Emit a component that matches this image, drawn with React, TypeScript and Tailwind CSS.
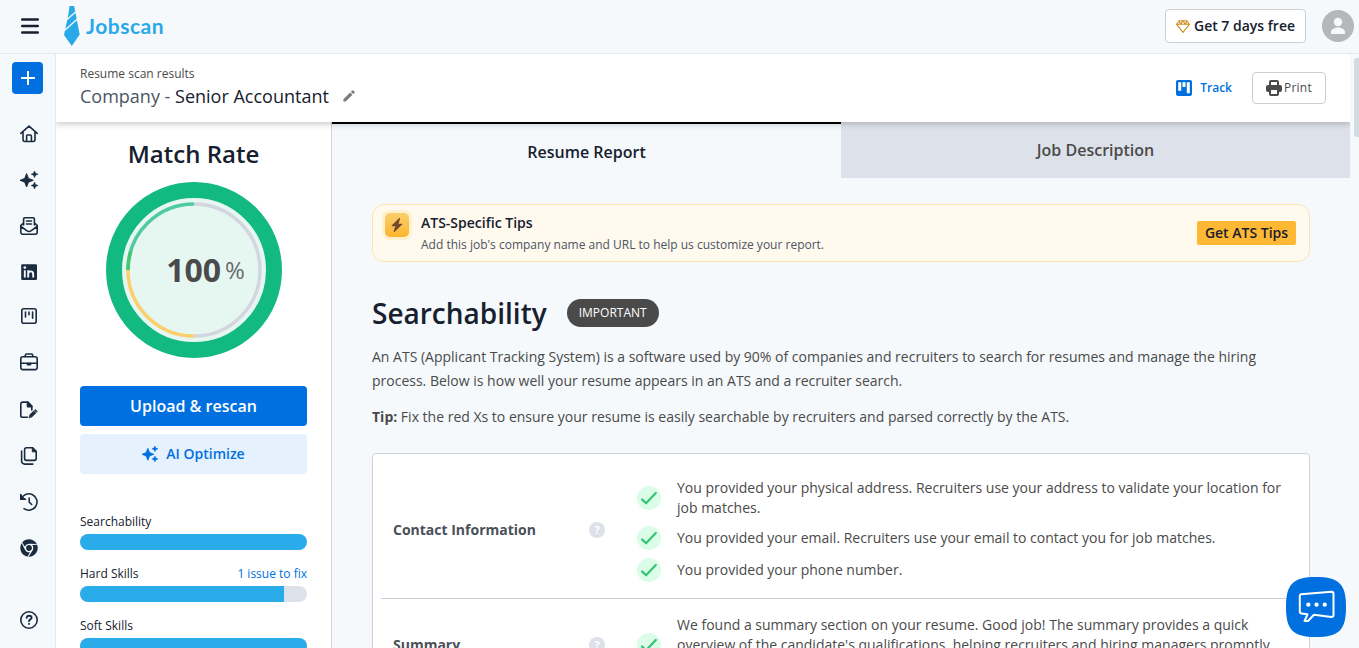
import React from "react";
import { FaChrome } from "react-icons/fa";

type IconProps = { className?: string };

function Sparkles({ className }: IconProps) {
  return (
    <svg viewBox="0 0 18 18" className={className} fill="currentColor">
      <path d="M6.6 2.6 8.5 7.4 13.3 9.3 8.5 11.200 6.600 16 4.700 11.200 0 9.300 4.700 7.400Z" stroke="currentColor" strokeWidth=".9" strokeLinejoin="round" />
      <path d="M14.500 0 15.500 2.300 18 3.200 15.500 4.200 14.500 6.500 13.500 4.200 11.200 3.200 13.500 2.300ZM14.500 11.200 15.500 13.600 18 14.500 15.500 15.500 14.500 18 13.500 15.500 11.200 14.500 13.500 13.600Z" stroke="currentColor" strokeWidth=".6" strokeLinejoin="round" />
    </svg>
  );
}

function Stroke({ children }: { children: React.ReactNode }) {
  return (
    <svg viewBox="0 0 18 18" className="h-[18px] w-[18px] overflow-visible" fill="none" stroke="currentColor" strokeWidth="1.6" strokeLinecap="round" strokeLinejoin="round">
      {children}
    </svg>
  );
}

const navIcons: { gap: string; icon: React.ReactNode }[] = [
  { gap: "mt-[31px]", icon: <Stroke><path d="M.8 8.400 9 1.200l8.200 7.200M3 6.800v7.700a2 2 0 0 0 2 2h8a2 2 0 0 0 2-2V6.800M6.600 16.300V11a1 1 0 0 1 1-1h2.800a1 1 0 0 1 1 1v5.300" /></Stroke> },
  { gap: "mt-7", icon: <Sparkles className="h-[18px] w-[18px]" /> },
  { gap: "mt-7", icon: <Stroke><path d="M3.600 8V2a1.200 1.200 0 0 1 1.200-1.200h8.400A1.200 1.200 0 0 1 14.400 2v6M6.500 4h5M6.500 7h5M3.500 6.200.800 8.300v7a1.900 1.900 0 0 0 1.900 1.900h12.600a1.900 1.900 0 0 0 1.900-1.900v-7l-2.700-2.100M1 9.500l5.700 4.200q2.300 1.500 4.600 0L17 9.500" /></Stroke> },
  { gap: "mt-7", icon: (
    <svg viewBox="0 0 18 18" className="h-[18px] w-[18px]">
      <rect x="1.200" y="1.200" width="15.800" height="15.800" rx="1.200" fill="currentColor" />
      <path d="M4.800 7.200v7.300M8.200 7.200v7.300M8.200 11c0-3.500 5-3.500 5 0v3.500" fill="none" stroke="#f5f9fc" strokeWidth="1.900" />
      <circle cx="4.800" cy="4.600" r="1.350" fill="#f5f9fc" />
    </svg>
  ) },
  { gap: "mt-[26px]", icon: <Stroke><rect x="1.800" y="1.800" width="14.400" height="14.400" rx="2" /><path d="M5.500 5v5M9 5v2.800M12.600 5v6.200" /></Stroke> },
  { gap: "mt-7", icon: <Stroke><rect x=".8" y="3.800" width="16.400" height="12.800" rx="2" /><path d="M5.300 3.500V2.300A1.300 1.300 0 0 1 6.600 1h4.800a1.300 1.300 0 0 1 1.300 1.300v1.200M1 10.200h16" /><path d="M7.500 10.500h3v1.200h-3z" fill="currentColor" /></Stroke> },
  { gap: "mt-[30px]", icon: <Stroke><path d="M7.500 16.300H2.700a1.900 1.900 0 0 1-1.900-1.900V3A1.900 1.900 0 0 1 2.700 1.100h5.200L11.800 5v4" /><path d="M7.500 1.200v4.400h4.300Z" fill="currentColor" /><path d="m9.200 16.500.8-2.900 5.200-5 2.100 2-5.300 5.200Z" fill="currentColor" strokeWidth=".8" /><path d="m14 9.500 2.300 2.300" stroke="#f5f9fc" strokeWidth=".7" /></Stroke> },
  { gap: "mt-7", icon: <Stroke><path d="M6.500.8h6.200l3.500 3.500v7.200a1.900 1.900 0 0 1-1.900 1.900H6.500a1.900 1.900 0 0 1-1.900-1.900V2.700A1.900 1.900 0 0 1 6.500.8ZM1.600 4v9.800a3.300 3.300 0 0 0 3.300 3.300h8" /><path d="M12.300 1.500v3.300h3.500Z" fill="currentColor" strokeWidth="1" /></Stroke> },
  { gap: "mt-7", icon: <Stroke><path d="M.8 1.500v4.700h4.700M1.300 5.700A8.200 8.200 0 1 1 4 15.600M9.200 5v4.200l2.500 2.300" /><path d="M.8 2.500v3.700h3.700Z" fill="currentColor" /></Stroke> },
  { gap: "mt-7", icon: <FaChrome size={18} /> },
];

function Sidebar() {
  return (
    <nav className="flex w-14 shrink-0 flex-col items-start border-r border-[#e4e7eb] pt-2 text-[#1b2b3f]">
      <button className="ml-3 flex h-8 w-[31px] shrink-0 items-center justify-center rounded-[4px] bg-[#0070e0] text-white">
        <svg viewBox="0 0 14 14" className="h-3.5 w-3.5" stroke="currentColor" strokeWidth="2" strokeLinecap="round"><path d="M7 .8v12.400M.8 7h12.400" /></svg>
      </button>
      {navIcons.map((n, i) => (
        <span key={i} className={`${n.gap} ml-5 flex h-[18px] w-[18px] shrink-0`}>{n.icon}</span>
      ))}
      <span className="ml-5 mt-[54px] flex h-[18px] w-[18px] shrink-0">
        <Stroke><circle cx="9" cy="9" r="8.200" /><path d="M6.700 6.800c.2-2.800 4.900-2.600 4.900 0 0 1.500-2.600 1.600-2.600 3.300M9 12.800v.1" strokeWidth="1.900" /></Stroke>
      </span>
    </nav>
  );
}

function Header() {
  return (
    <header className="flex h-[54px] shrink-0 items-center border-b border-[#e4e7eb] pb-px pl-[21px] pr-[5px]">
      <svg viewBox="0 0 18 16" className="h-4 w-[18px]" stroke="#16202e" strokeWidth="2.400" strokeLinecap="round"><path d="M1.200 1.500h15.600M1.200 8h15.600M1.200 14.500h15.600" /></svg>
      <svg viewBox="0 0 16 40" className="ml-[25px] h-10 w-4">
        <path d="M5.500 0h4.600l1 5L15.700 28.500 7.800 40 0 29 4.300 9Z" fill="#2aa9e9" />
        <path d="M2.500 14 13 4.800M.8 24.300 14 12.600" stroke="#f5f9fc" strokeWidth="1.300" />
      </svg>
      <span className="ml-[6px] font-['Lato'] text-[21px] font-bold leading-8 tracking-[0.5px] text-[#2aa9e9]">Jobscan</span>
      <div className="ml-auto flex items-center gap-4">
        <button className="flex h-[34px] w-[141px] items-center justify-center rounded-[4px] border border-[#ccced2] bg-white text-[14px] font-semibold leading-5 text-[#16202e]">
          <svg viewBox="0 0 14 13" className="mr-1 h-[13px] w-3.5" fill="none" stroke="#d18b22" strokeWidth="1.100" strokeLinejoin="round"><path d="M3.200.7h7.600l2.600 3.600L7 12.300.6 4.300ZM.6 4.300h12.800M3.200.7l1.200 3.600L7 .9l2.600 3.400L10.800.7" /></svg>
          Get 7 days free
        </button>
        <svg viewBox="0 0 32 32" className="h-8 w-8"><circle cx="16" cy="16" r="16" fill="#b5b7ba" /><circle cx="16" cy="12" r="4.200" fill="#f5f9fc" /><path d="M9 24v-1.800c0-3.200 4-4.700 7-4.700s7 1.500 7 4.700V24Z" fill="#f5f9fc" /></svg>
      </div>
    </header>
  );
}

function TitleBar() {
  return (
    <section className="relative z-10 flex h-[68px] shrink-0 items-center justify-between bg-white pl-6 pr-6 shadow-[0_2px_6px_rgba(0,0,0,0.22)]">
      <div>
        <div className="text-[12px] leading-4 text-[#4a4a4a]">Resume scan results</div>
        <div className="mt-px flex items-center pb-px text-[18px] leading-[26px] text-[#4b5563]">
          <span className="whitespace-pre">Company - <span className="text-[#16202e]">Senior Accountant</span></span>
          <svg viewBox="0 0 12 12" className="ml-[14px] h-3 w-3" fill="#7b7b7b"><path d="M.4 11.600V9.300L7.200 2.500l2.300 2.300-6.800 6.800ZM7.900 1.800 9.300.4q.5-.5 1 0l1.300 1.300q.5.500 0 1L10.200 4.100Z" /></svg>
        </div>
      </div>
      <div className="flex items-center">
        <svg viewBox="0 0 16 16" className="h-4 w-4"><rect width="16" height="16" rx="2" fill="#0070e0" /><path d="M2.200 2.200h3v8.600h-3zM6.500 2.200h3v4.900h-3zM10.800 2.200h3v11h-3z" fill="#fff" /></svg>
        <span className="ml-2 text-[12px] font-semibold text-[#0070e0]">Track</span>
        <button className="ml-[20px] flex h-8 w-[74px] items-center justify-center rounded-[4px] border border-[#ccced2] text-[12px] text-[#4a4a4a]">
          <svg viewBox="0 0 16 16" className="mr-[2px] h-4 w-4"><path d="M3 5V2q0-2 2-2h6q2 0 2 2v3h1q2 0 2 2v3q0 2-2 2h-1v2q0 2-2 2H5q-2 0-2-2v-2H2q-2 0-2-2V7q0-2 2-2Z" fill="#4a4a4a" /><path d="M5 2h6v3H5zM5 10h6v4H5z" fill="#fff" /></svg>
          <span className="font-medium tracking-[0.2px]">Print</span>
        </button>
      </div>
    </section>
  );
}

const skills = [
  { name: "Searchability", note: "", pct: 100 },
  { name: "Hard Skills", note: "1 issue to fix", pct: 90 },
  { name: "Soft Skills", note: "", pct: 100 },
];

function MatchPanel() {
  return (
    <aside className="flex w-[276px] shrink-0 flex-col border-r border-[#d0d4da] bg-white px-6 pt-4">
      <h2 className="text-center text-[24px] font-semibold leading-8 text-[#16202e]">Match Rate</h2>
      <div className="mt-3 grid h-[176px] place-items-center">
        <svg viewBox="0 0 176 176" className="col-start-1 row-start-1 h-[176px] w-[176px]" fill="none">
          <circle cx="88" cy="88" r="80" fill="#e6f7f1" stroke="#12b981" strokeWidth="16" />
          <path d="M88 22a66 66 0 0 1 0 132" stroke="#d3d6de" strokeWidth="3.500" />
          <path d="M88 154a66 66 0 0 1-66-66" stroke="#fbcf6c" strokeWidth="3.500" />
          <path d="M22 88a66 66 0 0 1 66-66" stroke="#50cba0" strokeWidth="3.500" />
          <path d="M22 88a66 66 0 0 1 2.800-19" stroke="#43c873" strokeWidth="3.500" />
        </svg>
        <div className="col-start-1 row-start-1 flex items-center pl-6 text-[#4a4a4a]">
          <span className="text-[32px] font-bold leading-10">100</span>
          <span className="ml-1 text-[24px] leading-10 text-[#6b6b6b]">%</span>
        </div>
      </div>
      <button className="mt-7 h-10 shrink-0 rounded-[4px] bg-[#0070e0] text-[16px] font-semibold text-white">Upload &amp; rescan</button>
      <button className="mt-2 flex h-10 shrink-0 items-center justify-center rounded-[4px] bg-[#e5f1fd] text-[14px] font-semibold leading-5 text-[#0070e0]">
        <Sparkles className="mr-2 h-4 w-4" />AI Optimize
      </button>
      <div className="mt-10 flex flex-col gap-4">
        {skills.map((s) => (
          <div key={s.name}>
            <div className="flex h-4 justify-between text-[12px] leading-4 text-[#16202e]"><span>{s.name}</span><span className="text-[#0070e0]">{s.note}</span></div>
            <div className="mt-1 h-4 overflow-hidden rounded-full bg-[#dde1e9]"><div className="h-full bg-[#2aabea]" style={{ width: `${s.pct}%` }} /></div>
          </div>
        ))}
      </div>
    </aside>
  );
}

function Check({ children }: { children: React.ReactNode }) {
  return (
    <div className="flex items-center">
      <svg viewBox="0 0 24 24" className="h-6 w-6 shrink-0" fill="none"><circle cx="12" cy="12" r="12" fill="#dbfce7" /><path d="m5 13.400 4 3.900L18.800 7" stroke="#36c477" strokeWidth="2.200" strokeLinecap="round" strokeLinejoin="round" /></svg>
      <p className="ml-4 whitespace-nowrap text-[14px] leading-5 text-[#4a4a4a]">{children}</p>
    </div>
  );
}

function Row({ title, children }: { title: string; children: React.ReactNode }) {
  return (
    <div className="flex items-center pl-3">
      <span className="w-[196px] text-[14px] font-bold leading-5 text-[#4a5059]">{title}</span>
      <span className="flex h-4 w-4 items-center justify-center rounded-full bg-[#dde1e9] text-[11px] font-bold leading-4 text-white">?</span>
      <div className="ml-8 flex flex-col gap-2">{children}</div>
    </div>
  );
}

function Report() {
  return (
    <main className="flex min-w-0 flex-1 flex-col">
      <div className="flex h-14 shrink-0 text-[16px] font-semibold">
        <div className="flex flex-1 items-center justify-center border-t-2 border-black pt-[2px] text-[#16202e]">Resume Report</div>
        <div className="flex flex-1 items-center justify-center bg-[#dde1e9] text-[#4a4a4a]">Job Description</div>
      </div>
      <div className="flex flex-col px-10 pt-[26px]">
        <div className="flex h-[58px] items-center justify-between rounded-[12px] border border-[#fde5b3] bg-[#fff9ee] pl-3 pr-[13px]">
          <div className="flex">
            <span className="mt-px flex h-6 w-6 items-center justify-center rounded-[5px] bg-linear-to-b from-[#f9cf6b] to-[#fdb42b] shadow-[0_0_0_3px_#fff0ce]">
              <svg viewBox="0 0 12 14" className="h-3.5 w-3" fill="#6f4a2d"><path d="M8.300.1.600 7.400q-.5.700.4.800h3.300L2.600 13.500q0 .8.800.4l7.800-7.300q.5-.8-.4-.8H7.500L9.100.6Q9.100-.4 8.300.1Z" /></svg>
            </span>
            <div className="ml-3">
              <div className="pt-px text-[14px] font-semibold leading-5 text-[#16202e]">ATS-Specific Tips</div>
              <div className="mt-[2px] text-[12px] leading-5 text-[#4b5563]">Add this job's company name and URL to help us customize your report.</div>
            </div>
          </div>
          <button className="h-6 w-[99px] rounded-[2px] bg-[#ffb833] text-[14px] font-semibold leading-6 text-[#16202e]">Get ATS Tips</button>
        </div>
        <div className="mt-[31px] flex h-10 items-center">
          <h1 className="text-[28px] font-semibold leading-10 text-[#16202e]">Searchability</h1>
          <span className="ml-5 flex h-7 items-center rounded-full bg-[#4a4a4a] px-3 text-[12px] text-white">IMPORTANT</span>
        </div>
        <p className="mt-3 text-[14px] leading-6 text-[#4a4a4a]">An ATS (Applicant Tracking System) is a software used by 90% of companies and recruiters to search for resumes and manage the hiring<br />process. Below is how well your resume appears in an ATS and a recruiter search.</p>
        <p className="mt-3 text-[14px] leading-6 text-[#4a4a4a]"><b>Tip:</b> Fix the red Xs to ensure your resume is easily searchable by recruiters and parsed correctly by the ATS.</p>
        <div className="mt-6 rounded-[4px] border border-[#ced2d8] bg-white px-2">
          <div className="border-b border-[#c9d0d6] pb-4 pt-6">
            <Row title="Contact Information">
              <Check>You provided your physical address. Recruiters use your address to validate your location for<br />job matches.</Check>
              <Check>You provided your email. Recruiters use your email to contact you for job matches.</Check>
              <Check>You provided your phone number.</Check>
            </Row>
          </div>
          <div className="pt-4">
            <Row title="Summary">
              <Check>We found a summary section on your resume. Good job! The summary provides a quick<br />overview of the candidate's qualifications, helping recruiters and hiring managers promptly<br />&nbsp;</Check>
            </Row>
          </div>
        </div>
      </div>
    </main>
  );
}

export default function App() {
  return (
    <div className="relative flex h-[648px] w-full flex-col overflow-hidden bg-[#f5f9fc] font-['Open_Sans','Noto_Sans',sans-serif]">
      <Header />
      <div className="flex min-h-0 flex-1">
        <Sidebar />
        <div className="flex min-w-0 flex-1 flex-col overflow-hidden">
          <TitleBar />
          <div className="flex min-h-0 flex-1 overflow-hidden">
            <MatchPanel />
            <Report />
          </div>
        </div>
        <div className="w-[9px] shrink-0 pl-1 pt-1"><div className="h-[79px] rounded-l-[3px] bg-[#d3dbe3]" /></div>
      </div>
      <button className="absolute left-[1286px] top-[577px] h-[60px] w-[60px]">
        <svg viewBox="0 0 60 60" className="h-[60px] w-[60px]" fill="none"><path d="M30 0C53 0 60 7 60 30S53 60 30 60 0 53 0 30 7 0 30 0Z" fill="#0070e0" /><path d="M15 17.200 45.500 14.800q2 0 2 2V38q0 2-2 2L28 37.700 22 44h-3.500l3-6.700-6-.8q-1.700-.2-1.700-2V19q0-1.700 1.200-1.800Z" stroke="#fff" strokeWidth="2" strokeLinejoin="round" /><path d="M22.300 27.700h.1M30.500 27.700h.1M38.700 27.700h.1" stroke="#fff" strokeWidth="4.200" strokeLinecap="round" /></svg>
      </button>
    </div>
  );
}
